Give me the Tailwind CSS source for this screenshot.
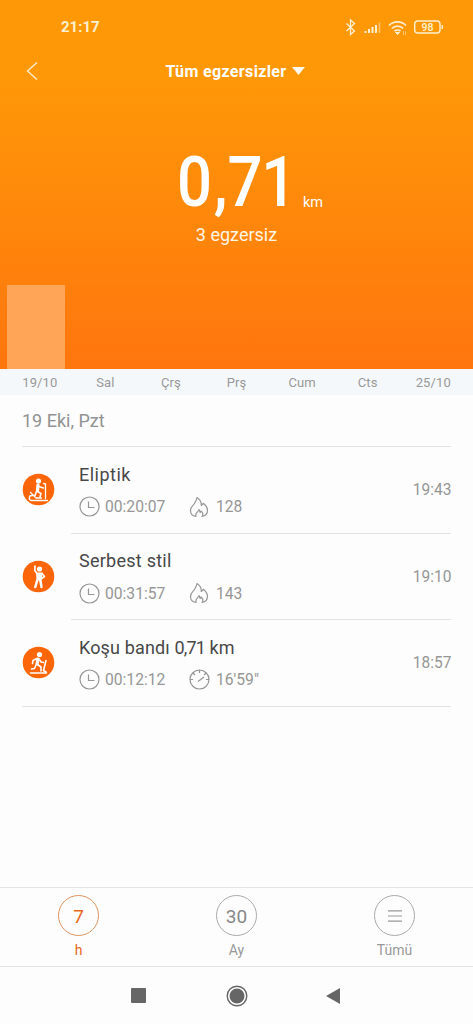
<!DOCTYPE html>
<html lang="tr">
<head>
    <meta charset="UTF-8">
    <meta name="viewport" content="width=device-width, initial-scale=1.0">
    <title>Tüm egzersizler</title>
    <script src="https://cdn.jsdelivr.net/npm/@tailwindcss/browser@4"></script>
</head>
<body class="bg-[#fdfdfd] font-['Roboto',sans-serif]">
  <div class="flex flex-col w-[473px] h-[1024px] overflow-hidden">

    <!-- HEADER -->
    <header class="relative flex flex-col h-[369px] shrink-0 bg-linear-to-b from-[#ff9807] from-20% to-[#ff750e] text-white">
      <!-- Status bar -->
      <div class="flex items-center justify-between h-[54px] pl-[61px] pr-[30px] text-[#fff0cf]">
        <span class="text-[15px] font-bold leading-none">21:17</span>
        <svg class="w-[98px] h-[20px]" viewBox="0 0 98 20" fill="none" stroke="currentColor">
          <path d="M1.500 6.500l8 7.500-4 3.500V3l4 3.500-8 7.500" stroke-width="1.300"/>
          <path d="M20.500 16v-2M24 16v-4M27.500 16v-6M31 16V8" stroke-width="2"/>
          <path d="M34.500 16V5.500" stroke-width="1.500" opacity=".5"/>
          <path d="M44 8.500a12 12 0 0 1 17 0M46.800 11.500a8 8 0 0 1 11.400 0M49.500 14.200a4.300 4.300 0 0 1 6 0" stroke-width="1.700"/>
          <path d="M50.500 15.500l2 2 2-2z" fill="currentColor"/>
          <path d="M58.500 14v4M60.500 14v4" stroke-width="1" opacity=".5"/>
          <rect x="69.700" y="4" width="25.300" height="12" rx="3" stroke-width="1.400"/>
          <path d="M97.200 8v4" stroke-width="1.400"/>
          <text x="82.400" y="13.600" text-anchor="middle" font-size="10.500" font-weight="600" fill="currentColor" stroke="none">98</text>
        </svg>
      </div>

      <!-- Title -->
      <div class="relative flex items-center justify-center h-[34px] pr-[3px]">
        <svg class="absolute left-[26px] top-[7px] w-[12px] h-[20px]" viewBox="0 0 12 20" fill="none" stroke="#fff0d8" stroke-width="1.3">
          <path d="M11 1.500L1.500 10l9.500 8.500"/>
        </svg>
        <h1 class="pt-[2px] text-[16px] font-bold leading-none tracking-[0.36px]">Tüm egzersizler</h1>
        <svg class="ml-[5px] w-[13px] h-[8px]" viewBox="0 0 13 8" fill="#fff8ec"><path d="M0 0h13L6.500 8z"/></svg>
      </div>

      <!-- Total -->
      <div class="flex items-end h-[122px] pl-[177px]">
        <div class="w-[117px] origin-left scale-x-[0.88] text-[70px] font-medium leading-[56px] whitespace-nowrap">0<span class="ml-[2px]">,</span><span class="tracking-[-1.5px]">71</span></div>
        <span class="pl-[9px] text-[14.5px] leading-[15px]">km</span>
      </div>
      <p class="pt-[13px] text-center text-[18px] leading-[24px] text-[#fff6e4]">3 egzersiz</p>

      <!-- Bar -->
      <div class="mt-auto ml-[7px] w-[58px] h-[84px] bg-[#ffa557]"></div>
    </header>

    <!-- Days -->
    <div class="flex justify-between h-[26px] shrink-0 px-[7px] bg-[#f5f8fa] text-[13px] leading-[28px] tracking-[0.1px] text-[#999] text-center">
      <span class="w-[66px]">19/10</span>
      <span class="w-[66px]">Sal</span>
      <span class="w-[66px]">Çrş</span>
      <span class="w-[66px]">Prş</span>
      <span class="w-[66px]">Cum</span>
      <span class="w-[66px]">Cts</span>
      <span class="w-[66px]">25/10</span>
    </div>

    <!-- Exercise list -->
    <main class="flex flex-col grow px-[22px]">
      <h2 class="h-[52px] shrink-0 border-b border-[#e3e3e3] text-[18px] leading-[51px] text-[#929292]">19 Eki, Pzt</h2>

      <div class="flex h-[87px] items-center">
        <svg class="mb-[2px] w-[33px] h-[33px] shrink-0" viewBox="0 0 33 33">
          <circle cx="16.500" cy="16.500" r="15.800" fill="#fc6508"/>
          <circle cx="16.500" cy="8" r="2.600" fill="#fff"/>
          <g fill="none" stroke="#fff" stroke-linecap="round" stroke-linejoin="round">
            <path d="M16 12l-.5 5.500" stroke-width="3.200"/>
            <path d="M16.500 13.500l5 1.500M15.500 18.500l3.500 2-1 3.500M14.500 18.500l-1.500 4" stroke-width="1.600"/>
            <path d="M21.500 10.500l2 .5v14.500M12.500 22.500H9.800a2.500 2.500 0 0 0 0 5h15.700M8.500 19.500l5.500 5.500h5.500" stroke-width="1.300"/>
          </g>
        </svg>
        <div class="ml-[16px] flex h-full grow items-center border-b border-[#e3e3e3] pl-[8px]">
          <div class="grow">
            <h3 class="text-[18px] leading-[24px] tracking-[0.5px] text-[#484848]">Eliptik</h3>
            <div class="mt-[9px] flex h-[22px] items-center text-[17px] leading-none text-[#969696]">
              <svg class="w-[21px] h-[21px]" viewBox="0 0 21 21" fill="none" stroke="currentColor" stroke-width="1.200"><circle cx="10.500" cy="10.500" r="9.500"/><path d="M9.500 5.500v6h6"/></svg>
              <span class="ml-[5px] w-[84px] origin-left scale-x-[0.92]">00:20:07</span>
              <svg class="w-[20px] h-[22px]" viewBox="0 0 20 22" fill="none" stroke="currentColor" stroke-width="1.200" stroke-linejoin="round"><path d="M7 20.500C3.500 20 1.500 17.500 1.500 14.500 1.500 11 4 9.800 5.500 7.500 6.600 5.800 7.500 4 8 1.500c3 2 4.500 4.500 4.300 8l2-2.200c2.700 2.200 4.200 4.200 4.200 7 0 3.200-2 5.700-5.500 6.200 1.500-2 .8-4-1-5.500l-.8 1.500-1.200-3c-.5 2.500-4.500 3.500-3 7z"/></svg>
              <span class="ml-[7px] origin-left scale-x-[0.92]">128</span>
            </div>
          </div>
          <span class="origin-right scale-x-[0.91] text-[17px] text-[#969696]">19:43</span>
        </div>
      </div>

      <div class="flex h-[86px] items-center">
        <svg class="mb-[2px] w-[33px] h-[33px] shrink-0" viewBox="0 0 33 33">
          <circle cx="16.500" cy="16.500" r="15.800" fill="#fc6508"/>
          <circle cx="17.500" cy="9" r="2.600" fill="#fff"/>
          <path d="M14 12.500h6.500l-1 8h-5z" fill="#fff"/>
          <g fill="none" stroke="#fff" stroke-linecap="round" stroke-linejoin="round">
            <path d="M15 13.500L12.800 10.500l.2-4.500M20 13.500l2.500 3-3 2" stroke-width="1.700"/>
            <path d="M15.300 20l-2 7M18.300 20l1.200 7" stroke-width="2.500"/>
          </g>
        </svg>
        <div class="ml-[16px] flex h-full grow items-center border-b border-[#e3e3e3] pl-[8px]">
          <div class="grow">
            <h3 class="text-[18px] leading-[24px] tracking-[0.25px] text-[#484848]">Serbest stil</h3>
            <div class="mt-[9px] flex h-[22px] items-center text-[17px] leading-none text-[#969696]">
              <svg class="w-[21px] h-[21px]" viewBox="0 0 21 21" fill="none" stroke="currentColor" stroke-width="1.200"><circle cx="10.500" cy="10.500" r="9.500"/><path d="M9.500 5.500v6h6"/></svg>
              <span class="ml-[5px] w-[84px] origin-left scale-x-[0.92]">00:31:57</span>
              <svg class="w-[20px] h-[22px]" viewBox="0 0 20 22" fill="none" stroke="currentColor" stroke-width="1.200" stroke-linejoin="round"><path d="M7 20.500C3.500 20 1.500 17.500 1.500 14.500 1.500 11 4 9.800 5.500 7.500 6.600 5.800 7.500 4 8 1.500c3 2 4.500 4.500 4.300 8l2-2.200c2.700 2.200 4.200 4.200 4.200 7 0 3.200-2 5.700-5.500 6.200 1.500-2 .8-4-1-5.500l-.8 1.500-1.200-3c-.5 2.500-4.500 3.500-3 7z"/></svg>
              <span class="ml-[7px] origin-left scale-x-[0.92]">143</span>
            </div>
          </div>
          <span class="origin-right scale-x-[0.91] text-[17px] text-[#969696]">19:10</span>
        </div>
      </div>

      <div class="flex h-[87px] items-center border-b border-[#e3e3e3]">
        <svg class="mb-[2px] w-[33px] h-[33px] shrink-0" viewBox="0 0 33 33">
          <circle cx="16.500" cy="16.500" r="15.800" fill="#fc6508"/>
          <circle cx="17.500" cy="8.500" r="2.600" fill="#fff"/>
          <g fill="none" stroke="#fff" stroke-linecap="round" stroke-linejoin="round">
            <path d="M16 13l-1 5" stroke-width="3.200"/>
            <path d="M15 12.500l-4 2-.5 3M17 13l2 3 2.500.5M15.500 18.500l3.500 2.500v4M14 19l-1.500 3.500-3 .5" stroke-width="1.600"/>
            <path d="M24 14.500l-2.500 10 2.500 1.500M8.500 27h16" stroke-width="1.600"/>
          </g>
        </svg>
        <div class="ml-[16px] flex h-full grow items-center pl-[8px]">
          <div class="grow">
            <h3 class="text-[18px] leading-[24px] tracking-[0.15px] text-[#484848]">Koşu bandı <span class="tracking-[-0.9px]">0,71</span> km</h3>
            <div class="mt-[9px] flex h-[22px] items-center text-[17px] leading-none text-[#969696]">
              <svg class="w-[21px] h-[21px]" viewBox="0 0 21 21" fill="none" stroke="currentColor" stroke-width="1.200"><circle cx="10.500" cy="10.500" r="9.500"/><path d="M9.500 5.500v6h6"/></svg>
              <span class="ml-[5px] w-[84px] origin-left scale-x-[0.92]">00:12:12</span>
              <svg class="w-[21px] h-[21px]" viewBox="0 0 21 21" fill="none" stroke="currentColor" stroke-width="1.200"><circle cx="10.500" cy="10.500" r="9.500"/><path d="M9 12.500l6-4.500M10.500 1v3M1 10.500h3M17 10.500h3M4 4l2 2M17 4l-2 2"/></svg>
              <span class="ml-[6px] origin-left scale-x-[0.92]">16'59"</span>
            </div>
          </div>
          <span class="origin-right scale-x-[0.91] text-[17px] text-[#969696]">18:57</span>
        </div>
      </div>
    </main>

    <!-- Period tabs -->
    <nav class="flex h-[80px] shrink-0 border-y border-[#e4e4e4] text-[14px] leading-[18px] text-[#999]">
      <div class="flex w-[157px] flex-col items-center pt-[7px] text-[#e8681a]">
        <span class="flex size-[41px] items-center justify-center rounded-full border border-[#dd9360] pt-[2px] text-[19px]">7</span>
        <span class="mt-[5px]">h</span>
      </div>
      <div class="flex w-[159px] flex-col items-center pt-[7px]">
        <span class="flex size-[41px] items-center justify-center rounded-full border border-[#aaa] pt-[2px] text-[19px] text-[#888]">30</span>
        <span class="mt-[5px]">Ay</span>
      </div>
      <div class="flex w-[157px] flex-col items-center pt-[7px]">
        <span class="flex size-[41px] items-center justify-center rounded-full border border-[#aaa]">
          <svg class="w-[14px] h-[12px]" viewBox="0 0 14 12" stroke="#999" stroke-width="1.200"><path d="M0 .8h14M0 6h14M0 11.200h14"/></svg>
        </span>
        <span class="mt-[5px]">Tümü</span>
      </div>
    </nav>

    <!-- Android navigation -->
    <div class="flex h-[57px] shrink-0 items-center pl-[131px] text-[#666]">
      <svg class="w-[15px] h-[15px]" viewBox="0 0 15 15" fill="currentColor"><rect width="15" height="15" rx="1"/></svg>
      <svg class="ml-[80px] w-[22px] h-[22px]" viewBox="0 0 22 22"><circle cx="11" cy="11" r="9.800" fill="none" stroke="currentColor" stroke-width="1.400"/><circle cx="11" cy="11" r="7.500" fill="currentColor"/></svg>
      <svg class="ml-[78px] w-[14px] h-[16px]" viewBox="0 0 14 16" fill="currentColor"><path d="M14 0v16L0 8z"/></svg>
    </div>
  </div>
</body>
</html>
